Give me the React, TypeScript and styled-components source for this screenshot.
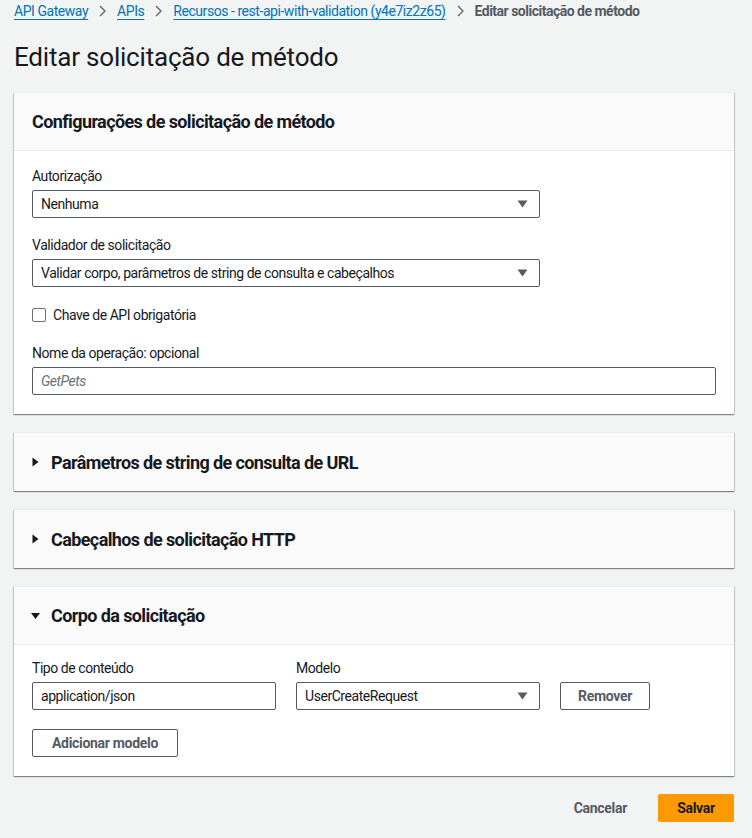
import React from "react";
import styled, { createGlobalStyle } from "styled-components";

const Global = createGlobalStyle`
  html, body { margin: 0; padding: 0; background: #f2f3f3; }
  body {
    font-family: Roboto, "Liberation Sans", sans-serif;
    color: #16191f;
    font-size: 14px;
    letter-spacing: -0.45px;
  }
  * { box-sizing: border-box; }
`;

const Page = styled.div`
  padding: 0 18px 16px 14px;
  display: flex;
  flex-direction: column;
`;

const Breadcrumbs = styled.nav`
  display: flex;
  align-items: center;
  gap: 11px;
  height: 22px;
  font-size: 14px;
  line-height: 22px;
`;

const Crumb = styled.a`
  color: #0073bb;
  text-decoration: underline;
  text-underline-offset: 3px;
`;

const Current = styled.span`
  color: #545b64;
  font-weight: 700;
  letter-spacing: -0.5px;
`;

const Sep = styled.span`
  display: inline-flex;
`;

const Title = styled.h1`
  margin: 18px 0 0;
  font-size: 26px;
  line-height: 34px;
  font-weight: 400;
  letter-spacing: -0.2px;
  color: #16191f;
`;

const Card = styled.section`
  margin-top: 18px;
  background: #fff;
  border-top: 1px solid #eaeded;
  box-shadow: 0 1px 1px 0 rgba(0, 28, 36, 0.3), 1px 1px 1px 0 rgba(0, 28, 36, 0.15),
    -1px 1px 1px 0 rgba(0, 28, 36, 0.15);
`;

const CardHeader = styled.header<{ $open?: boolean }>`
  background: #fafafa;
  height: 58px;
  padding: 0 18px;
  display: flex;
  align-items: center;
  gap: 12px;
  border-bottom: ${(p) => (p.$open ? "1px solid #eaeded" : "none")};
  font-size: 18px;
  font-weight: 700;
  letter-spacing: -0.6px;
  color: #16191f;
`;

const Caret = styled.span<{ $open?: boolean }>`
  display: inline-flex;
  width: 7px;
  justify-content: center;
  transform: rotate(${(p) => (p.$open ? 90 : 0)}deg);
`;

const CardBody = styled.div<{ $top?: number; $gap?: number }>`
  padding: ${(p) => p.$top ?? 15}px 18px 19px;
  display: flex;
  flex-direction: column;
  gap: ${(p) => p.$gap ?? 17}px;
`;

const Field = styled.div<{ $w?: string }>`
  display: flex;
  flex-direction: column;
  width: ${(p) => p.$w || "100%"};
`;

const Label = styled.label`
  font-size: 14px;
  line-height: 20px;
  color: #16191f;
  margin-bottom: 4px;
`;

const SelectBox = styled.div`
  height: 28px;
  border: 1px solid #545b64;
  border-radius: 2px;
  background: #fff;
  display: flex;
  align-items: center;
  justify-content: space-between;
  padding: 0 11px 0 8px;
  font-size: 14px;
  color: #16191f;
`;

const TextBox = styled.div<{ $placeholder?: boolean }>`
  height: 28px;
  border: 1px solid #545b64;
  border-radius: 2px;
  background: #fff;
  display: flex;
  align-items: center;
  padding: 0 8px;
  font-size: 14px;
  color: ${(p) => (p.$placeholder ? "#687078" : "#16191f")};
  font-style: ${(p) => (p.$placeholder ? "italic" : "normal")};
`;

const CheckRow = styled.label`
  display: flex;
  align-items: center;
  gap: 7px;
  font-size: 14px;
  line-height: 20px;
  margin: 1px 0;
`;

const Check = styled.span`
  width: 14px;
  height: 14px;
  border: 1px solid #687078;
  border-radius: 2px;
  background: #fff;
`;

const Row = styled.div`
  display: flex;
  align-items: flex-end;
  gap: 20px;
`;

const Button = styled.button<{ $variant?: "normal" | "primary" | "link"; $w?: number }>`
  height: 28px;
  ${(p) => (p.$w ? `width: ${p.$w}px;` : "")}
  padding: 0 ${(p) => (p.$w ? 0 : 18)}px;
  white-space: nowrap;
  border-radius: 2px;
  font-family: inherit;
  font-size: 14px;
  font-weight: 700;
  letter-spacing: -0.3px;
  cursor: pointer;
  border: 1px solid ${(p) => (p.$variant === "primary" ? "#ff9900" : p.$variant === "link" ? "transparent" : "#545b64")};
  background: ${(p) => (p.$variant === "primary" ? "#ff9900" : p.$variant === "link" ? "transparent" : "#fff")};
  color: ${(p) => (p.$variant === "primary" ? "#16191f" : "#545b64")};
`;

const Footer = styled.div`
  display: flex;
  justify-content: flex-end;
  align-items: center;
  gap: 12px;
  margin-top: 18px;
`;

const Chevron = () => (
  <svg width="7" height="12" viewBox="0 0 7 12">
    <path d="M1 1 L6 6 L1 11" fill="none" stroke="#687078" strokeWidth="1.5" />
  </svg>
);

const TriDown = () => (
  <svg width="11" height="8" viewBox="0 0 11 8">
    <path d="M0.5 0.5 H10.5 L5.5 7.5 Z" fill="#545b64" />
  </svg>
);

const TriRight = () => (
  <svg width="7" height="10" viewBox="0 0 7 10">
    <path d="M0.5 0.5 L6.5 5 L0.5 9.5 Z" fill="#16191f" />
  </svg>
);

const Section: React.FC<{ title: string; open?: boolean; children?: React.ReactNode }> = ({ title, open, children }) => (
  <Card>
    <CardHeader $open={!!open}>
      <Caret $open={open}>
        <TriRight />
      </Caret>
      {title}
    </CardHeader>
    {open && children}
  </Card>
);

export default function App() {
  return (
    <>
      <Global />
      <Page>
        <Breadcrumbs>
          <Crumb>API Gateway</Crumb>
          <Sep><Chevron /></Sep>
          <Crumb>APIs</Crumb>
          <Sep><Chevron /></Sep>
          <Crumb>Recursos - rest-api-with-validation (y4e7iz2z65)</Crumb>
          <Sep><Chevron /></Sep>
          <Current>Editar solicitação de método</Current>
        </Breadcrumbs>
        <Title>Editar solicitação de método</Title>

        <Card>
          <CardHeader $open>Configurações de solicitação de método</CardHeader>
          <CardBody>
            <Field $w="508px">
              <Label>Autorização</Label>
              <SelectBox>
                Nenhuma
                <TriDown />
              </SelectBox>
            </Field>
            <Field $w="508px">
              <Label>Validador de solicitação</Label>
              <SelectBox>
                Validar corpo, parâmetros de string de consulta e cabeçalhos
                <TriDown />
              </SelectBox>
            </Field>
            <CheckRow>
              <Check />
              Chave de API obrigatória
            </CheckRow>
            <Field>
              <Label>Nome da operação: opcional</Label>
              <TextBox $placeholder>GetPets</TextBox>
            </Field>
          </CardBody>
        </Card>

        <Section title="Parâmetros de string de consulta de URL" />
        <Section title="Cabeçalhos de solicitação HTTP" />
        <Section title="Corpo da solicitação" open>
          <CardBody $top={13} $gap={19}>
            <Row>
              <Field $w="244px">
                <Label>Tipo de conteúdo</Label>
                <TextBox>application/json</TextBox>
              </Field>
              <Field $w="244px">
                <Label>Modelo</Label>
                <SelectBox>
                  UserCreateRequest
                  <TriDown />
                </SelectBox>
              </Field>
              <Button $w={90}>Remover</Button>
            </Row>
            <Row>
              <Button $w={146}>Adicionar modelo</Button>
            </Row>
          </CardBody>
        </Section>

        <Footer>
          <Button $variant="link">Cancelar</Button>
          <Button $variant="primary" $w={76}>Salvar</Button>
        </Footer>
      </Page>
    </>
  );
}
